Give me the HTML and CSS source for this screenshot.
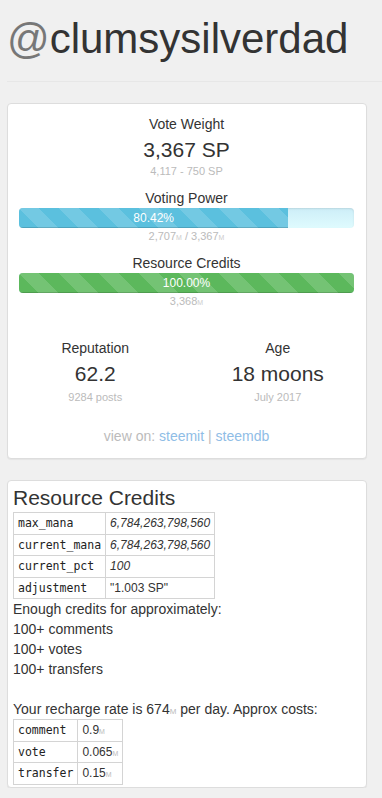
FILE: index.html
```html
<!DOCTYPE html>
<html lang="en">
<head>
  <meta charset="UTF-8" />
  <meta name="viewport" content="width=device-width, initial-scale=1.0"/>
  <title>@clumsysilverdad</title>
  <link rel="stylesheet" href="styles.css">
</head>
<body>
  <div class="page">

    <!-- Account name -->
    <h1 class="title"><span class="at">@</span>clumsysilverdad</h1>

    <!-- Summary box -->
    <div class="card summary">
      <div class="stat">
        <div class="stat-label">Vote Weight</div>
        <div class="stat-value">3,367 SP</div>
        <div class="stat-sub">4,117 - 750 SP</div>
      </div>

      <div class="meter">
        <div class="stat-label">Voting Power</div>
        <div class="progress">
          <div class="bar" style="width: 80.42%">80.42%</div>
        </div>
        <div class="stat-sub">2,707<small>M</small> / 3,367<small>M</small></div>
      </div>

      <div class="meter">
        <div class="stat-label">Resource Credits</div>
        <div class="progress">
          <div class="bar bar-success" style="width: 100%">100.00%</div>
        </div>
        <div class="stat-sub">3,368<small>M</small></div>
      </div>

      <div class="pair">
        <div class="stat">
          <div class="stat-label">Reputation</div>
          <div class="stat-value">62.2</div>
          <div class="stat-sub">9284 posts</div>
        </div>
        <div class="stat">
          <div class="stat-label">Age</div>
          <div class="stat-value">18 moons</div>
          <div class="stat-sub">July 2017</div>
        </div>
      </div>

      <div class="links">view on: <a href="#">steemit</a> | <a href="#">steemdb</a></div>
    </div>

    <!-- Resource credits box -->
    <div class="card rc">
      <h3>Resource Credits</h3>
      <table class="kv">
        <tr><td class="key">max_mana</td><td class="num">6,784,263,798,560</td></tr>
        <tr><td class="key">current_mana</td><td class="num">6,784,263,798,560</td></tr>
        <tr><td class="key">current_pct</td><td class="num">100</td></tr>
        <tr><td class="key">adjustment</td><td>"1.003 SP"</td></tr>
      </table>
      <p>
        Enough credits for approximately:<br>
        100+ comments<br>
        100+ votes<br>
        100+ transfers<br>
        <br>
        Your recharge rate is 674<small>M</small> per day. Approx costs:
      </p>
      <table class="kv">
        <tr><td class="key">comment</td><td>0.9<small>M</small></td></tr>
        <tr><td class="key">vote</td><td>0.065<small>M</small></td></tr>
        <tr><td class="key">transfer</td><td>0.15<small>M</small></td></tr>
      </table>
    </div>

  </div>
</body>
</html>
```

FILE: styles.css
```css
body {
  margin: 0;
  background: #f0f0f0;
  font-family: "Liberation Sans", Arial, sans-serif;
  color: #333;
}
.page {
  padding-top: 16px;
}
.title {
  margin: 0 0 21px 7px;
  padding-bottom: 19px;
  border-bottom: 1px solid #e7e7e7;
  font-size: 42px;
  line-height: 46px;
  font-weight: normal;
  color: #333;
}
.title .at {
  color: #777;
}
.card {
  margin: 0 15px 21px 7px;
  background: #fff;
  border: 1px solid #ddd;
  border-radius: 4px;
  box-shadow: 0 1px 1px rgba(0, 0, 0, 0.05);
}
small {
  line-height: 0;
}

/* summary */
.summary {
  padding: 10px 12px 12px 11px;
  text-align: center;
}
.stat-label {
  font-size: 14px;
  line-height: 20px;
}
.stat-value {
  font-size: 21px;
  line-height: 24px;
  margin-top: 4px;
}
.stat-sub {
  font-size: 11px;
  line-height: 16px;
  color: #bbb;
  margin-top: 1px;
}
.stat-sub small {
  font-size: 7px;
  color: #ccc;
}
.meter {
  margin-top: 9px;
}
.meter .stat-sub {
  margin-top: 0;
}
.progress {
  height: 20px;
  border-radius: 4px;
  overflow: hidden;
  background: linear-gradient(#cdeef8, #dffbfe);
  box-shadow: inset 0 1px 2px rgba(0, 0, 0, 0.1);
}
.bar {
  height: 100%;
  color: #fff;
  font-size: 12px;
  line-height: 20px;
  text-align: center;
  background-color: #5bc0de;
  background-image: linear-gradient(45deg, rgba(255, 255, 255, 0.15) 25%, transparent 25%, transparent 50%, rgba(255, 255, 255, 0.15) 50%, rgba(255, 255, 255, 0.15) 75%, transparent 75%, transparent);
  background-size: 40px 40px;
  box-shadow: inset 0 -1px 0 rgba(0, 0, 0, 0.15);
}
.bar-success {
  background-color: #5cb85c;
}
.pair {
  display: grid;
  grid-template-columns: 1fr 1fr;
  margin: 29px -15px 0;
}
.pair .stat-sub {
  margin-top: 3px;
}
.links {
  margin-top: 21px;
  font-size: 14px;
  line-height: 20px;
  color: #bbb;
}
.links a {
  color: #8fbde6;
  text-decoration: none;
}

/* resource credits */
.rc {
  padding: 6px 5px 2px;
  margin-bottom: 0;
}
.rc h3 {
  margin: 0 0 3px;
  font-size: 21px;
  line-height: 22px;
  font-weight: normal;
}
.rc p {
  margin: 0;
  font-size: 14px;
  line-height: 20px;
}
.rc p small {
  font-size: 8px;
  color: #bbb;
}
.kv {
  border-collapse: collapse;
  font-size: 12px;
}
.kv td {
  border: 1px solid #d4d4d4;
  padding: 3px 4px;
  line-height: 14.5px;
  height: 14.5px;
}
.kv .key {
  font-family: "DejaVu Sans Mono", "Liberation Mono", monospace;
  font-size: 11.5px;
  color: #222;
}
.kv .num {
  font-style: italic;
}
.kv small {
  font-size: 7px;
  color: #bbb;
}
```
